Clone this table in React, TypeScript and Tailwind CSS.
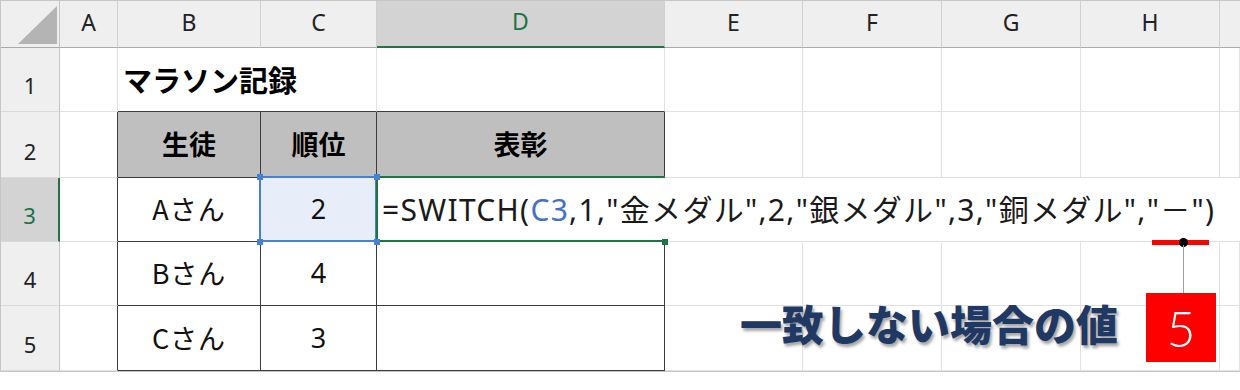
import clsx from "clsx";

const LETTERS = ["A", "B", "C", "D", "E", "F", "G", "H"];

// table B2:D5 gets dark borders
function inTable(r: number, c: number) {
  return r >= 2 && r <= 5 && c >= 2 && c <= 4;
}

function Cell({
  r,
  c,
  className,
  children,
}: {
  r: number;
  c: number;
  className?: string;
  children?: React.ReactNode;
}) {
  const rDark = inTable(r, c) || inTable(r, c + 1);
  const bDark = inTable(r, c) || inTable(r + 1, c);
  return (
    <div
      className={clsx(
        "relative border-r border-b",
        rDark ? "border-r-[#3c3c3c]" : "border-r-[#e1e1e1]",
        bDark ? "border-b-[#3c3c3c]" : "border-b-[#e1e1e1]",
        className
      )}
    >
      {children}
    </div>
  );
}

function RowHead({ n, active }: { n: number; active?: boolean }) {
  return (
    <div
      className={clsx(
        "flex items-end justify-center pb-[9px] border-b border-b-[#dadada] text-[22px] font-['Noto_Sans',sans-serif]",
        active
          ? "bg-[#d3d3d3] text-[#217346] border-r-2 border-r-[#217346]"
          : "bg-[#efefef] text-[#222] border-r border-r-[#c6c6c6]"
      )}
    >
      {n}
    </div>
  );
}

const jp = "font-['Noto_Sans_CJK_JP',sans-serif]";

export default function App() {
  return (
    <div className="relative w-[1240px] h-[390px] bg-white overflow-hidden">
      <div className="grid grid-cols-[59px_58px_143px_116px_288px_138px_139px_139px_139px_20px] grid-rows-[47px_64px_66px_64px_64px_65px] border-t border-l border-b border-[#c6c6c6] w-[1240px]">
        {/* column headers */}
        <div className="relative bg-[#efefef] border-r border-r-[#c6c6c6] border-b border-b-[#ababab]">
          <svg className="absolute left-0 top-0" width="59" height="46">
            <polygon points="17,43 56,43 56,5" fill="#b4b4b4" />
          </svg>
        </div>
        {LETTERS.map((l) => (
          <div
            key={l}
            className={clsx(
              "flex items-center justify-center pb-1 text-[23px] font-['Noto_Sans',sans-serif] border-r border-r-[#d0d0d0]",
              l === "D"
                ? "bg-[#d3d3d3] text-[#217346] border-b-2 border-b-[#217346]"
                : "bg-[#efefef] text-[#222] border-b border-b-[#ababab]"
            )}
          >
            {l}
          </div>
        ))}
        <div className="bg-[#efefef] border-b border-b-[#ababab]" />

        {/* row 1 */}
        <RowHead n={1} />
        <Cell r={1} c={1} />
        <Cell r={1} c={2} className="col-span-2 flex items-center pl-[5px]">
          <span className={clsx(jp, "text-[29px] font-bold text-black whitespace-nowrap")}>マラソン記録</span>
        </Cell>
        {[4, 5, 6, 7, 8, 9].map((c) => (
          <Cell key={c} r={1} c={c} />
        ))}

        {/* row 2 */}
        <RowHead n={2} />
        <Cell r={2} c={1} />
        {["生徒", "順位", "表彰"].map((t, i) => (
          <Cell key={t} r={2} c={i + 2} className="bg-[#bfbfbf] flex items-center justify-center">
            <span className={clsx(jp, "text-[27px] font-bold text-black")}>{t}</span>
          </Cell>
        ))}
        {[5, 6, 7, 8, 9].map((c) => (
          <Cell key={c} r={2} c={c} />
        ))}

        {/* row 3 */}
        <RowHead n={3} active />
        <Cell r={3} c={1} />
        <Cell r={3} c={2} className="flex items-center justify-center">
          <span className={clsx(jp, "text-[27px] tracking-[1px] text-[#111]")}>Aさん</span>
        </Cell>
        <Cell r={3} c={3} className="bg-[#e8eef9] flex items-center justify-center">
          <span className="text-[27px] text-[#111] font-['Noto_Sans',sans-serif]">2</span>
          <div className="absolute -left-[2px] -top-[2px] -right-px -bottom-px border-2 border-[#4a7fd8]" />
          <div className="absolute -left-[4px] -top-[4px] w-[6px] h-[6px] bg-[#4a7fd8] z-10" />
          <div className="absolute -left-[4px] -bottom-[4px] w-[6px] h-[6px] bg-[#4a7fd8] z-10" />
          <div className="absolute -right-[4px] -top-[4px] w-[6px] h-[6px] bg-[#4a7fd8] z-20" />
          <div className="absolute -right-[4px] -bottom-[4px] w-[6px] h-[6px] bg-[#4a7fd8] z-20" />
        </Cell>
        <div className="relative border-b border-b-[#3c3c3c] flex items-center pl-[5px] z-10">
          <div className="absolute -left-px -top-[2px] bottom-[-1px] right-0 border-l-2 border-t-2 border-b-2 border-[#217346]" />
          <div className="absolute -right-[3px] -bottom-[4px] w-[6px] h-[6px] bg-[#217346]" />
          <span className="relative whitespace-nowrap text-[30px] tracking-[1.3px] text-[#1a1a1a] font-['Noto_Sans','Noto_Sans_CJK_JP',sans-serif]">
            =SWITCH(<span className="text-[#4472c4]">C3</span>,1,"金メダル",2,"銀メダル",3,"銅メダル","－")
          </span>
        </div>
        <div className="col-span-5 border-b border-b-[#e1e1e1]" />

        {/* rows 4 and 5 */}
        {[
          ["Bさん", "4"],
          ["Cさん", "3"],
        ].map(([name, rank], i) => {
          const r = i + 4;
          return [
            <RowHead key={`h${r}`} n={r} />,
            <Cell key={`a${r}`} r={r} c={1} />,
            <Cell key={`b${r}`} r={r} c={2} className="flex items-center justify-center">
              <span className={clsx(jp, "text-[27px] tracking-[1px] text-[#111]")}>{name}</span>
            </Cell>,
            <Cell key={`c${r}`} r={r} c={3} className="flex items-center justify-center">
              <span className="text-[27px] text-[#111] font-['Noto_Sans',sans-serif]">{rank}</span>
            </Cell>,
            <Cell key={`d${r}`} r={r} c={4} />,
            ...[5, 6, 7, 8, 9].map((c) => <Cell key={`${r}-${c}`} r={r} c={c} />),
          ];
        })}
      </div>

      {/* callout */}
      <div className="absolute left-[1152px] top-[240px] w-[57px] h-[5px] bg-[#ff0000]" />
      <div className="absolute left-[1179px] top-[238px] w-[9px] h-[9px] rounded-full bg-black" />
      <div className="absolute left-[1183px] top-[245px] w-px h-[48px] bg-[#a0a0a0]" />
      <div className="absolute left-[1146px] top-[293px] w-[70px] h-[69px] bg-[#ff0000] flex items-center justify-center">
        <span className="text-white text-[50px] font-light leading-none font-['Lato',sans-serif]">5</span>
      </div>
      <div
        className={clsx(
          jp,
          "absolute left-[740px] top-[298px] text-[42px] leading-[50px] font-black text-[#203864] whitespace-nowrap [text-shadow:2px_3px_3px_rgba(0,0,0,0.35)]"
        )}
      >
        一致しない場合の値
      </div>
    </div>
  );
}
